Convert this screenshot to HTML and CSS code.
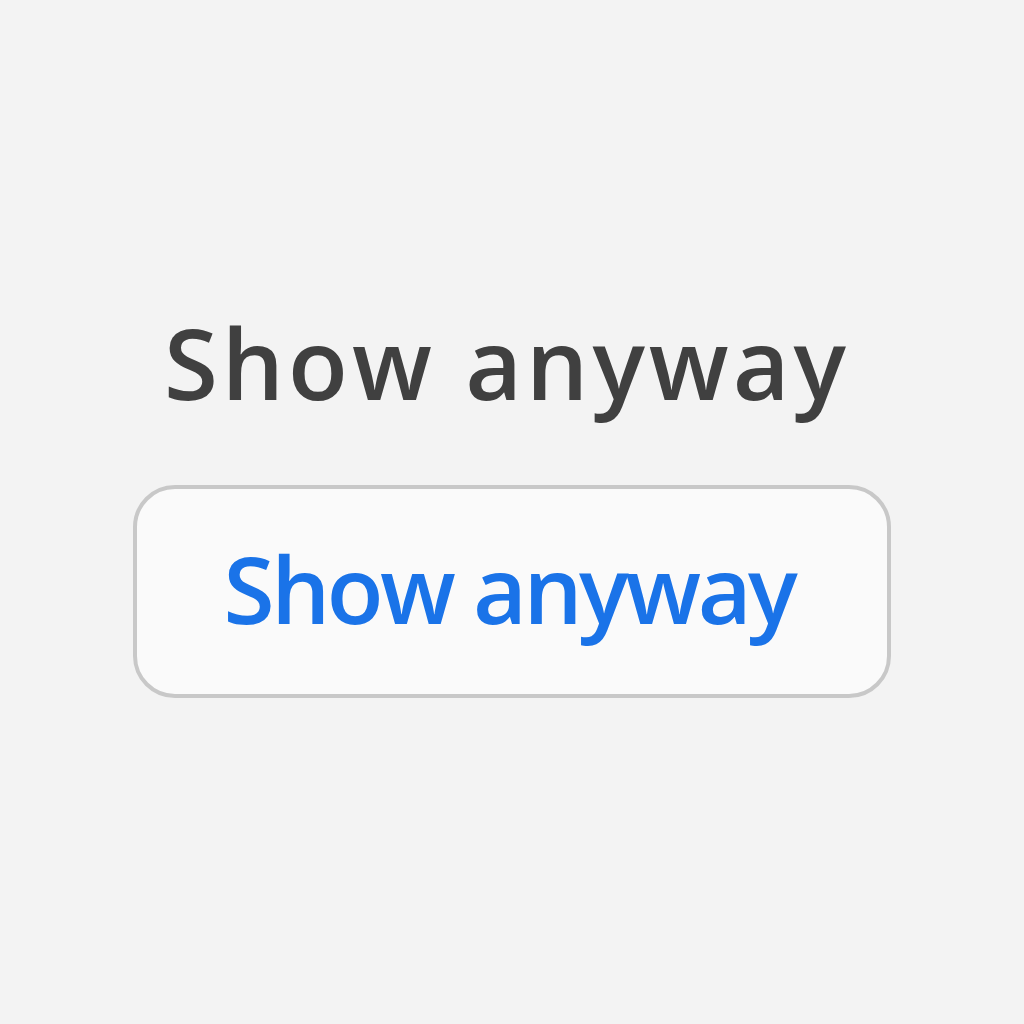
FILE: index.html
```html
<!DOCTYPE html>
<html lang="en">
<head>
<meta charset="utf-8">
<title>Show anyway</title>
<link rel="stylesheet" href="styles.css">
</head>
<body>
<main class="stage">
  <h1 class="title">Show anyway</h1>
  <button class="action" type="button">Show anyway</button>
</main>
</body>
</html>
```
FILE: styles.css
```css
html, body {
  margin: 0;
  padding: 0;
  background: #f3f3f3;
}
.stage {
  width: 1024px;
  height: 1024px;
  display: flex;
  flex-direction: column;
  align-items: center;
  font-family: "Open Sans", "Noto Sans", sans-serif;
}
.title {
  margin: 302px 10px 0 0;
  font-size: 98px;
  font-weight: 600;
  line-height: 120px;
  color: #404040;
  letter-spacing: 4px;
}
.action {
  margin-top: 63px;
  width: 758px;
  height: 213px;
  box-sizing: border-box;
  border: 4px solid #c8c8c8;
  border-radius: 42px;
  background: #fafafa;
  color: #1a73e8;
  font-family: "Open Sans", "Noto Sans", sans-serif;
  font-size: 93px;
  font-weight: 600;
  letter-spacing: -3.5px;
  padding: 0 6px 8px 0;
}
```
